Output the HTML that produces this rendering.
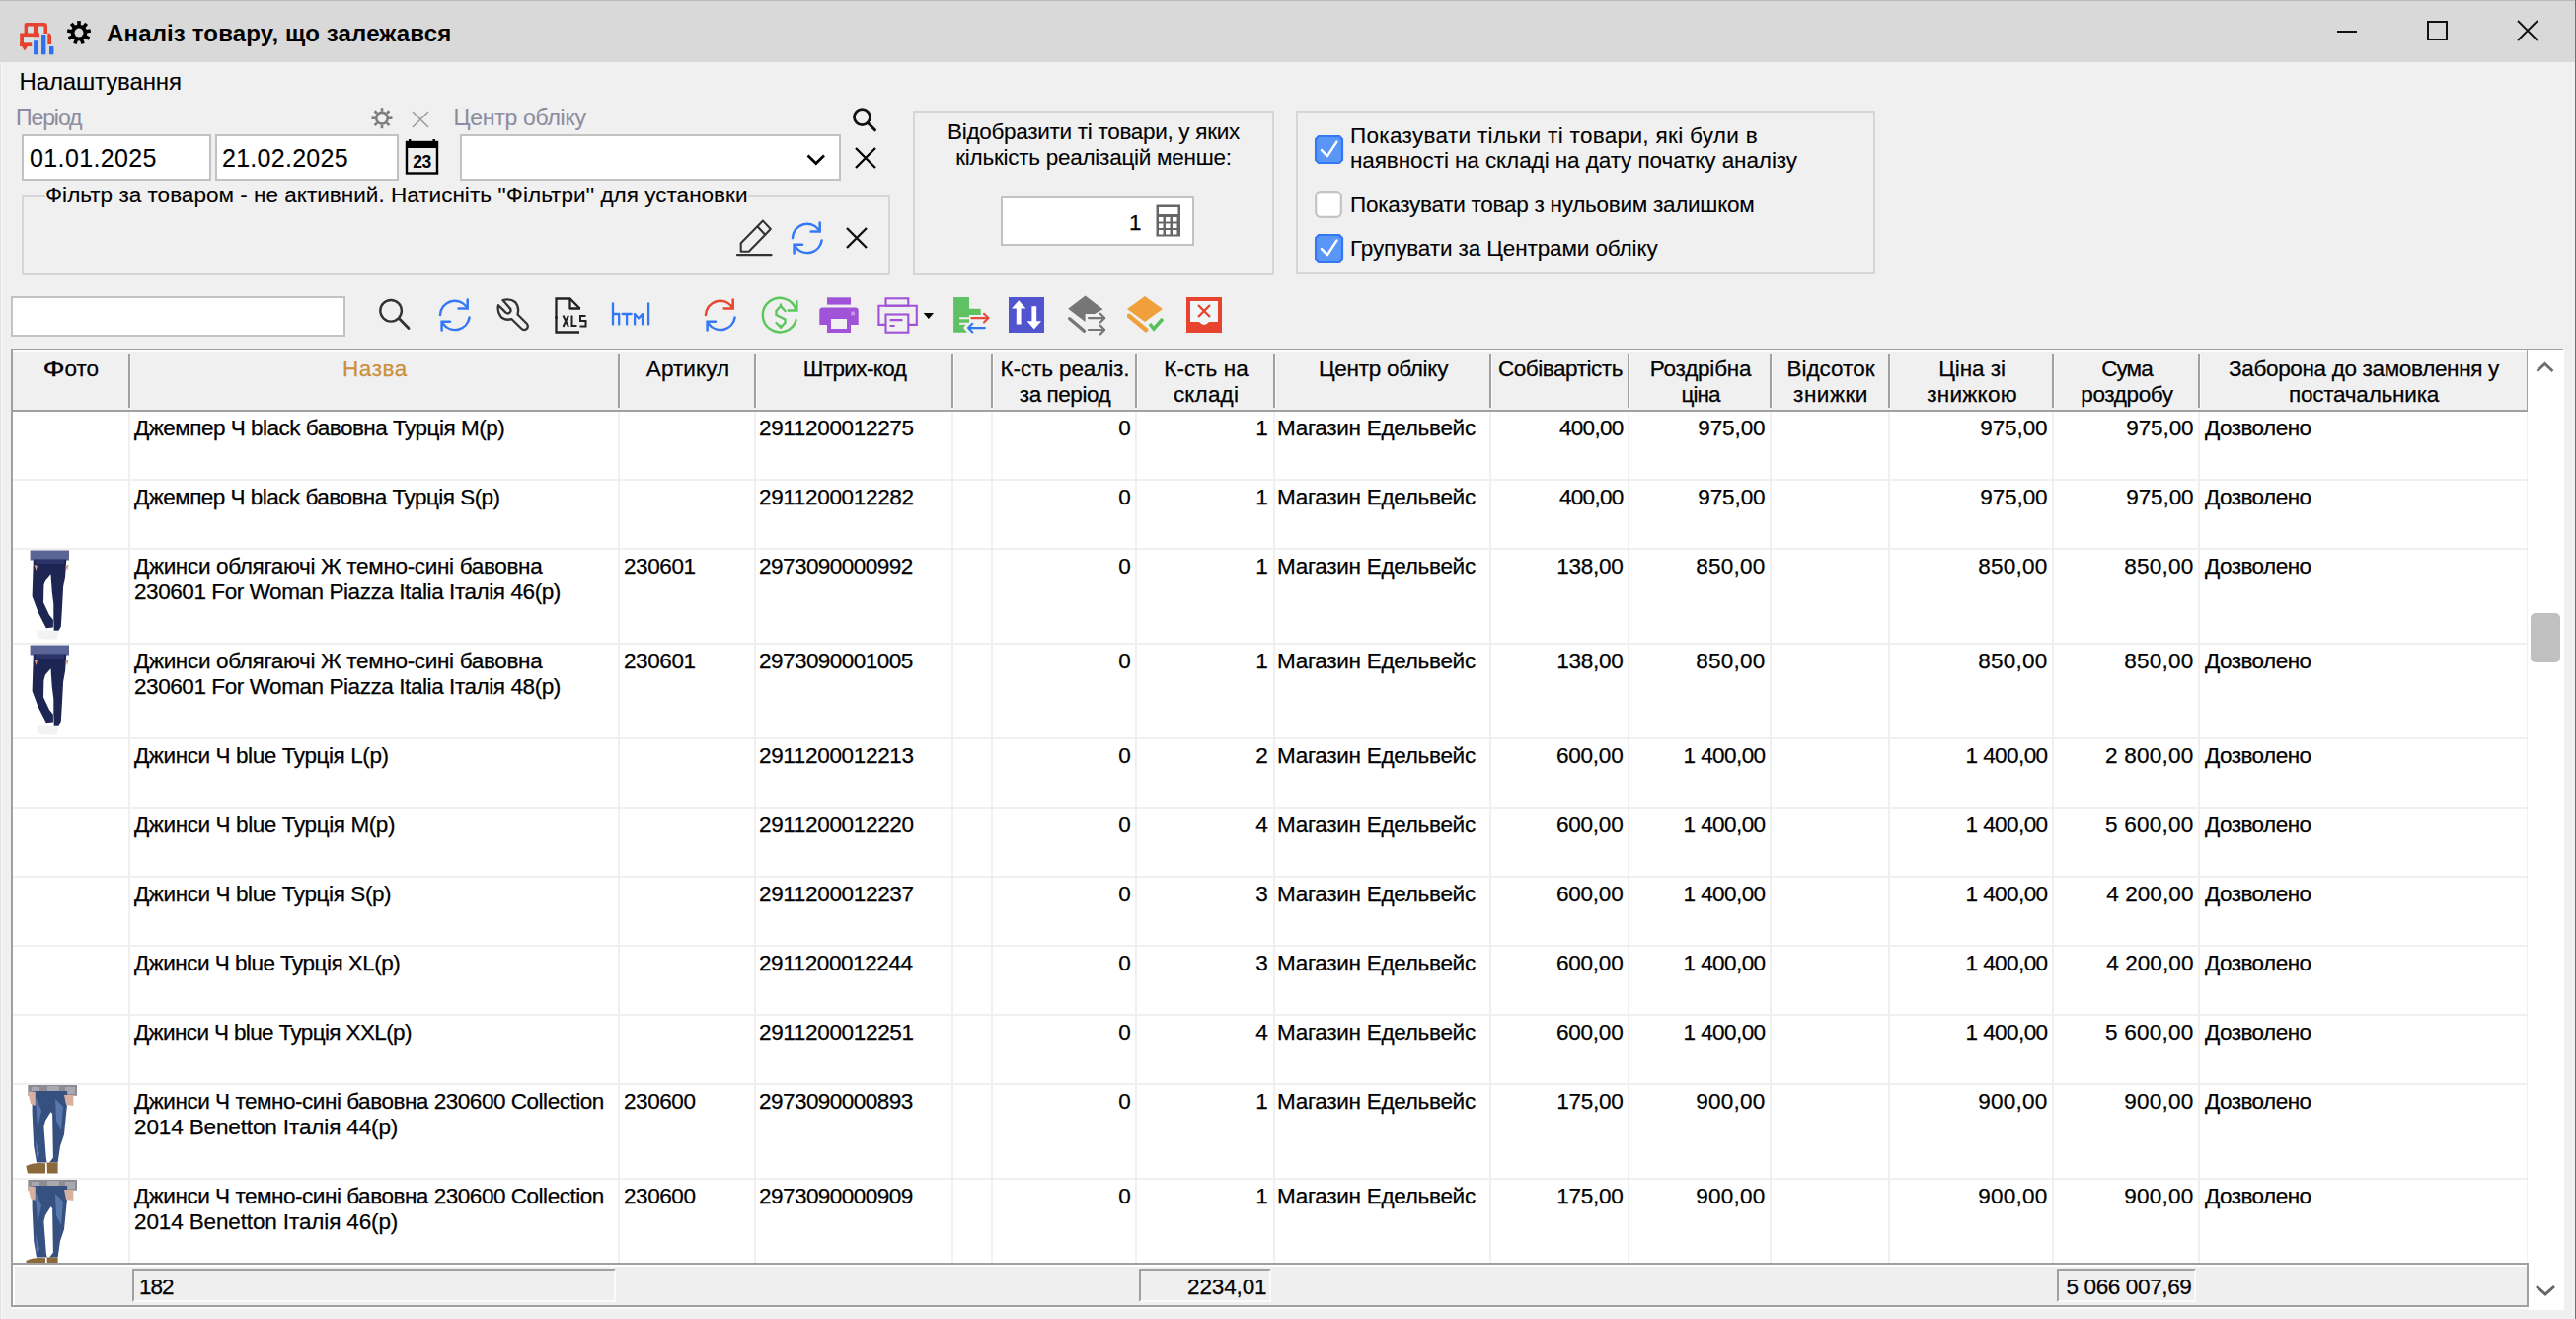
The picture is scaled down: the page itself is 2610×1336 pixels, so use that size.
<!DOCTYPE html>
<html><head><meta charset="utf-8"><title>Аналіз товару, що залежався</title>
<style>
html,body{margin:0;padding:0;}
body{width:2610px;height:1336px;position:relative;overflow:hidden;background:#f0f0f0;font-family:"Liberation Sans",sans-serif;}
.t{position:absolute;white-space:nowrap;font-family:"Liberation Sans",sans-serif;}
.r{position:absolute;}
</style></head><body>
<div class="r" style="left:0px;top:0px;width:2610px;height:1px;background:#b9b9b9;"></div>
<div class="r" style="left:0px;top:1px;width:2610px;height:62px;background:#d9d9d9;"></div>
<div class="r" style="left:2609px;top:0px;width:1px;height:1336px;background:#707070;"></div>
<div class="r" style="left:0px;top:63px;width:1px;height:1273px;background:#e2e2e2;"></div>
<div class="r" style="left:1px;top:63px;width:1px;height:1273px;background:#f8f8f8;"></div>
<svg class="r" style="left:0px;top:0px" width="60" height="60" viewBox="0 0 60 60">
<path d="M26.4 34 V25 Q26.4 24.8 27 24.8 H45 Q46.2 24.8 46.2 26.5 V34" fill="none" stroke="#e8412f" stroke-width="3.6"/>
<rect x="33.7" y="26" width="5" height="8" fill="#e8412f"/>
<rect x="28.2" y="27.3" width="5.5" height="5.5" fill="#d2e2e6"/><rect x="38.7" y="27.3" width="5.4" height="5.5" fill="#d2e2e6"/>
<path d="M22.1 47 V35.4 H40" fill="none" stroke="#e8412f" stroke-width="3.8"/>
<path d="M50.2 45 V37 Q50.2 35.4 48.4 35.2" fill="none" stroke="#e8412f" stroke-width="3.8"/>
<path d="M20.2 43.2 H32.2 V47 H20.2 Z" fill="#e8412f"/>
<path d="M21.8 46.5 H28.2 L25 51.4 Z" fill="#e8412f"/>
<rect x="24" y="37.3" width="10" height="5.9" fill="#d6e6e6"/>
<rect x="34.1" y="41.2" width="4.3" height="14.1" fill="#2f6ff0"/>
<rect x="42" y="35" width="4.4" height="20.3" fill="#2f6ff0"/>
<rect x="50" y="47" width="4.4" height="8.3" fill="#2f6ff0"/>
</svg>
<svg class="r" style="left:60px;top:14px" width="40" height="40" viewBox="0 0 40 40"><circle cx="20" cy="19.1" r="8.4" fill="#000"/><rect x="18.2" y="7.100000000000001" width="3.6" height="6" fill="#000" transform="rotate(0.0 20 19.1)"/><rect x="18.2" y="7.100000000000001" width="3.6" height="6" fill="#000" transform="rotate(40.0 20 19.1)"/><rect x="18.2" y="7.100000000000001" width="3.6" height="6" fill="#000" transform="rotate(80.0 20 19.1)"/><rect x="18.2" y="7.100000000000001" width="3.6" height="6" fill="#000" transform="rotate(120.0 20 19.1)"/><rect x="18.2" y="7.100000000000001" width="3.6" height="6" fill="#000" transform="rotate(160.0 20 19.1)"/><rect x="18.2" y="7.100000000000001" width="3.6" height="6" fill="#000" transform="rotate(200.0 20 19.1)"/><rect x="18.2" y="7.100000000000001" width="3.6" height="6" fill="#000" transform="rotate(240.0 20 19.1)"/><rect x="18.2" y="7.100000000000001" width="3.6" height="6" fill="#000" transform="rotate(280.0 20 19.1)"/><rect x="18.2" y="7.100000000000001" width="3.6" height="6" fill="#000" transform="rotate(320.0 20 19.1)"/><circle cx="20" cy="19.1" r="4.5" fill="#d9d9d9"/></svg>
<div class="t" style="top:18.18px;font-size:24px;line-height:31px;color:#000;font-weight:bold;letter-spacing:0.154px;left:108px;">Аналіз товару, що залежався</div>
<div class="r" style="left:2368px;top:31px;width:20px;height:2px;background:#111;"></div>
<div class="r" style="left:2459px;top:21px;width:21px;height:20px;border:2px solid #111;box-sizing:border-box;"></div>
<svg class="r" style="left:2550px;top:20px" width="22" height="22" viewBox="0 0 22 22"><path d="M1 1 L21 21 M21 1 L1 21" stroke="#111" stroke-width="1.8"/></svg>
<div class="t" style="top:67.18px;font-size:24px;line-height:31px;color:#000;letter-spacing:-0.136px;left:19.5px;-webkit-text-stroke:0.1px #000;">Налаштування</div>
<div class="t" style="top:104.03px;font-size:23px;line-height:30px;color:#8d8d9f;letter-spacing:-1.08px;left:16px;-webkit-text-stroke:0.1px #8d8d9f;">Період</div>
<svg class="r" style="left:375px;top:108px" width="24" height="24" viewBox="0 0 24 24"><circle cx="12" cy="11.7" r="5.8" fill="none" stroke="#7c7c7c" stroke-width="2.6"/><line x1="12.00" y1="4.70" x2="12.00" y2="1.20" stroke="#7c7c7c" stroke-width="2.6"/><line x1="16.95" y1="6.75" x2="19.42" y2="4.28" stroke="#7c7c7c" stroke-width="2.6"/><line x1="19.00" y1="11.70" x2="22.50" y2="11.70" stroke="#7c7c7c" stroke-width="2.6"/><line x1="16.95" y1="16.65" x2="19.42" y2="19.12" stroke="#7c7c7c" stroke-width="2.6"/><line x1="12.00" y1="18.70" x2="12.00" y2="22.20" stroke="#7c7c7c" stroke-width="2.6"/><line x1="7.05" y1="16.65" x2="4.58" y2="19.12" stroke="#7c7c7c" stroke-width="2.6"/><line x1="5.00" y1="11.70" x2="1.50" y2="11.70" stroke="#7c7c7c" stroke-width="2.6"/><line x1="7.05" y1="6.75" x2="4.58" y2="4.28" stroke="#7c7c7c" stroke-width="2.6"/></svg>
<svg class="r" style="left:416px;top:111px" width="20" height="20" viewBox="0 0 20 20"><path d="M2 2 L18 18 M18 2 L2 18" stroke="#9c9c9c" stroke-width="1.6"/></svg>
<div class="t" style="top:104.03px;font-size:23px;line-height:30px;color:#8d8d9f;letter-spacing:-0.273px;left:459.5px;-webkit-text-stroke:0.1px #8d8d9f;">Центр обліку</div>
<svg class="r" style="left:860px;top:106px" width="30" height="30" viewBox="0 0 30 30"><circle cx="13.5" cy="12.7" r="8" fill="none" stroke="#111" stroke-width="2.8"/><path d="M19.3 18.5 L26.5 25.8" stroke="#111" stroke-width="3" stroke-linecap="round"/></svg>
<div class="r" style="left:22px;top:136px;width:192px;height:47px;background:#fff;border:2px solid #c2c2c2;box-sizing:border-box;"></div>
<div class="r" style="left:218px;top:136px;width:186px;height:47px;background:#fff;border:2px solid #c2c2c2;box-sizing:border-box;"></div>
<div class="t" style="top:144.34px;font-size:25px;line-height:32px;color:#000;letter-spacing:0.378px;left:30px;-webkit-text-stroke:0.1px #000;">01.01.2025</div>
<div class="t" style="top:144.34px;font-size:25px;line-height:32px;color:#000;letter-spacing:0.278px;left:225px;-webkit-text-stroke:0.1px #000;">21.02.2025</div>
<svg class="r" style="left:410px;top:140px" width="35" height="38" viewBox="0 0 35 38"><rect x="2" y="4" width="31" height="31.5" fill="#eeeeee" stroke="#000" stroke-width="2.4"/><rect x="1" y="3" width="33" height="7" fill="#000"/><rect x="4" y="1" width="2.4" height="4" fill="#000"/><rect x="28.5" y="1" width="2.4" height="4" fill="#000"/><text x="17.5" y="29.5" font-family="Liberation Sans" font-weight="bold" font-size="17.5" text-anchor="middle" fill="#000" letter-spacing="-0.5">23</text></svg>
<div class="r" style="left:466px;top:136px;width:386px;height:47px;background:#fff;border:2px solid #c2c2c2;box-sizing:border-box;"></div>
<svg class="r" style="left:816px;top:155px" width="22" height="14" viewBox="0 0 22 14"><path d="M2.5 2.5 L10.8 10.5 L19 2.5" fill="none" stroke="#000" stroke-width="2.7"/></svg>
<svg class="r" style="left:865px;top:148px" width="24" height="24" viewBox="0 0 24 24"><path d="M2 2 L22 22 M22 2 L2 22" stroke="#000" stroke-width="2.3"/></svg>
<div class="r" style="left:22px;top:198px;width:880px;height:81px;border:2px solid #d6d6d6;box-sizing:border-box;"></div>
<div class="r" style="left:46px;top:190px;width:712px;height:22px;background:#f0f0f0;"></div>
<div class="t" style="top:182.70px;font-size:22.5px;line-height:29px;color:#000;letter-spacing:0.019px;left:46px;-webkit-text-stroke:0.1px #000;">Фільтр за товаром - не активний. Натисніть &#x27;&#x27;Фільтри&#x27;&#x27; для установки</div>
<svg class="r" style="left:744px;top:222px" width="40" height="40" viewBox="0 0 40 40"><path d="M6.7 32.7 V24.3 L29 1.6 L36.8 10 L14.8 32.7 Z" fill="none" stroke="#333" stroke-width="2.1" stroke-linejoin="round"/><path d="M23.4 7.3 L31.2 15.8" stroke="#333" stroke-width="2.1"/><path d="M3 36.2 H37.5" stroke="#333" stroke-width="2.2" stroke-linecap="round"/></svg>
<svg class="r" style="left:800px;top:223px" width="36" height="36" viewBox="0 0 36 36"><path d="M3 18 A14.8 14.8 0 0 1 29.5 9.5" fill="none" stroke="#3478f6" stroke-width="2.5" stroke-linecap="round"/><path d="M30.7 2.4 V11.5 H21.6" fill="none" stroke="#3478f6" stroke-width="2.5" stroke-linecap="round"/><path d="M32.6 20.5 A14.8 14.8 0 0 1 6 27" fill="none" stroke="#3478f6" stroke-width="2.5" stroke-linecap="round"/><path d="M4.6 33.6 V24.7 H13" fill="none" stroke="#3478f6" stroke-width="2.5" stroke-linecap="round"/></svg>
<svg class="r" style="left:856px;top:229px" width="24" height="24" viewBox="0 0 24 24"><path d="M2 2 L22 22 M22 2 L2 22" stroke="#111" stroke-width="2.4"/></svg>
<div class="r" style="left:925px;top:112px;width:366px;height:167px;border:2px solid #d6d6d6;box-sizing:border-box;"></div>
<div class="t" style="top:118.70px;font-size:22.5px;line-height:29px;color:#000;letter-spacing:-0.304px;left:508px;width:1200px;text-align:center;-webkit-text-stroke:0.1px #000;">Відобразити ті товари, у яких</div>
<div class="t" style="top:144.70px;font-size:22.5px;line-height:29px;color:#000;letter-spacing:-0.258px;left:508px;width:1200px;text-align:center;-webkit-text-stroke:0.1px #000;">кількість реалізацій менше:</div>
<div class="r" style="left:1014px;top:199px;width:196px;height:50px;background:#fff;border:2px solid #c2c2c2;box-sizing:border-box;"></div>
<div class="t" style="top:210.70px;font-size:22.5px;line-height:29px;color:#000;left:-43.5px;width:1200px;text-align:right;-webkit-text-stroke:0.25px #000;">1</div>
<svg class="r" style="left:1171px;top:207px" width="26" height="33" viewBox="0 0 26 33"><rect x="0.5" y="0.5" width="24.5" height="32" fill="#666"/><rect x="3" y="3" width="19.5" height="7" fill="#fff"/><rect x="3" y="13.0" width="4.5" height="4.5" fill="#fff"/><rect x="10" y="13.0" width="4.5" height="4.5" fill="#fff"/><rect x="17" y="13.0" width="4.5" height="4.5" fill="#fff"/><rect x="3" y="19.5" width="4.5" height="4.5" fill="#fff"/><rect x="10" y="19.5" width="4.5" height="4.5" fill="#fff"/><rect x="17" y="19.5" width="4.5" height="4.5" fill="#fff"/><rect x="3" y="26.0" width="4.5" height="4.5" fill="#fff"/><rect x="10" y="26.0" width="4.5" height="4.5" fill="#fff"/><rect x="17" y="26.0" width="4.5" height="4.5" fill="#fff"/></svg>
<div class="r" style="left:1313px;top:112px;width:587px;height:166px;border:2px solid #d6d6d6;box-sizing:border-box;"></div>
<svg class="r" style="left:1331.5px;top:136.8px" width="30" height="30" viewBox="0 0 30 30"><path d="M4 1 H25 L28 4 V25 L25 28 H4 L1 25 V4 Z" fill="#5a96f5" stroke="#3478f6" stroke-width="2.2" stroke-linejoin="round"/><path d="M7 15.2 L12.9 21.1 L22.4 6.6" fill="none" stroke="#fff" stroke-width="2.5" stroke-linecap="round" stroke-linejoin="round"/></svg>
<svg class="r" style="left:1331.5px;top:193px" width="30" height="30" viewBox="0 0 30 30"><rect x="1.2" y="1.2" width="25.6" height="25.6" rx="4.5" fill="#fff" stroke="#c4c4c4" stroke-width="2.2"/></svg>
<svg class="r" style="left:1331.5px;top:236.8px" width="30" height="30" viewBox="0 0 30 30"><path d="M4 1 H25 L28 4 V25 L25 28 H4 L1 25 V4 Z" fill="#5a96f5" stroke="#3478f6" stroke-width="2.2" stroke-linejoin="round"/><path d="M7 15.2 L12.9 21.1 L22.4 6.6" fill="none" stroke="#fff" stroke-width="2.5" stroke-linecap="round" stroke-linejoin="round"/></svg>
<div class="t" style="top:122.70px;font-size:22.5px;line-height:29px;color:#000;letter-spacing:0.321px;left:1368px;-webkit-text-stroke:0.1px #000;">Показувати тільки ті товари, які були в</div>
<div class="t" style="top:148.20px;font-size:22.5px;line-height:29px;color:#000;letter-spacing:-0.083px;left:1368px;-webkit-text-stroke:0.1px #000;">наявності на складі на дату початку аналізу</div>
<div class="t" style="top:192.70px;font-size:22.5px;line-height:29px;color:#000;letter-spacing:-0.266px;left:1368px;-webkit-text-stroke:0.1px #000;">Показувати товар з нульовим залишком</div>
<div class="t" style="top:236.70px;font-size:22.5px;line-height:29px;color:#000;letter-spacing:-0.119px;left:1368px;-webkit-text-stroke:0.1px #000;">Групувати за Центрами обліку</div>
<div class="r" style="left:11px;top:300px;width:339px;height:41px;background:#fff;border:2px solid #c2c2c2;box-sizing:border-box;"></div>
<svg class="r" style="left:380px;top:298px" width="40" height="40" viewBox="0 0 40 40"><circle cx="16.1" cy="16.8" r="10.8" fill="none" stroke="#333" stroke-width="2.4"/><path d="M24.5 24.8 L34 34.5" stroke="#333" stroke-width="2.8" stroke-linecap="round"/></svg>
<svg class="r" style="left:442.5px;top:301px" width="36" height="36" viewBox="0 0 36 36"><path d="M3 18 A14.8 14.8 0 0 1 29.5 9.5" fill="none" stroke="#3478f6" stroke-width="2.5" stroke-linecap="round"/><path d="M30.7 2.4 V11.5 H21.6" fill="none" stroke="#3478f6" stroke-width="2.5" stroke-linecap="round"/><path d="M32.6 20.5 A14.8 14.8 0 0 1 6 27" fill="none" stroke="#3478f6" stroke-width="2.5" stroke-linecap="round"/><path d="M4.6 33.6 V24.7 H13" fill="none" stroke="#3478f6" stroke-width="2.5" stroke-linecap="round"/></svg>
<svg class="r" style="left:503px;top:302px" width="34" height="34" viewBox="0 0 34 34"><path d="M6.5 2 Q14 0 19 4 Q23.5 9 21.5 16.5 L31 26 Q33 29.5 30 31.5 Q27.5 33 25 30.5 L15.5 21.2 Q9 23 4.5 18.8 Q0.5 13.5 2 7.2 L9.5 14.6 Q12 16.5 14 14 Q15.5 11.5 13 9.5 Z" fill="none" stroke="#333" stroke-width="2.3" stroke-linejoin="round"/></svg>
<svg class="r" style="left:560px;top:300px" width="38" height="40" viewBox="0 0 38 40"><path d="M3.5 23 V2.5 H17.5 L27.5 12.5" fill="none" stroke="#222" stroke-width="2.3"/><path d="M17.5 2.5 V12.5 H28" fill="none" stroke="#222" stroke-width="2.3" stroke-linejoin="round"/><path d="M3.5 20 V36.5 H27" fill="none" stroke="#222" stroke-width="2.3"/><path d="M10.5 19.5 L16 31 M16 19.5 L10.5 31" stroke="#222" stroke-width="2"/><path d="M19.5 19.5 V30 H24.5" fill="none" stroke="#222" stroke-width="2"/><path d="M33.5 20 H28 V25 H33.5 V30.5 H27.5" fill="none" stroke="#222" stroke-width="2"/></svg>
<svg class="r" style="left:605px;top:295px" width="60" height="45" viewBox="0 0 60 45"><g fill="none" stroke="#3478f6" stroke-width="2.3" stroke-linecap="round" stroke-linejoin="round"><path d="M16 12.5 V33.5 M16 23 H22.2 V33.5"/><path d="M25.6 23 H34.7 M30.1 23 V33.5"/><path d="M38.1 33.5 V23 L42.1 27.4 L46 23 V33.5"/><path d="M52.1 12.5 V33.5"/></g></svg>
<svg class="r" style="left:712px;top:301px" width="36" height="36" viewBox="0 0 36 36"><path d="M3 18 A14.8 14.8 0 0 1 29.5 9.5" fill="none" stroke="#e8472f" stroke-width="2.5" stroke-linecap="round"/><path d="M30.7 2.4 V11.5 H21.6" fill="none" stroke="#e8472f" stroke-width="2.5" stroke-linecap="round"/><path d="M32.6 20.5 A14.8 14.8 0 0 1 6 27" fill="none" stroke="#3478f6" stroke-width="2.5" stroke-linecap="round"/><path d="M4.6 33.6 V24.7 H13" fill="none" stroke="#3478f6" stroke-width="2.5" stroke-linecap="round"/></svg>
<svg class="r" style="left:765px;top:295px" width="50" height="46" viewBox="0 0 50 46"><g fill="none" stroke="#5cc65c" stroke-width="2.4" stroke-linecap="round"><path d="M41.5 18.5 A17.3 17.3 0 1 0 41.7 29.1"/><path d="M42.4 10.3 V19.5 H33.6"/><path d="M30.5 20 L26 15 L21.5 20 V24 L30.5 28.5 V32 L26 36.5 L21.5 32"/><path d="M26 13.5 V15 M26 36.5 V35"/></g></svg>
<svg class="r" style="left:765px;top:295px" width="110" height="46" viewBox="0 0 110 46"><path d="M73 6.3 H97 V13.6 H73 Z" fill="#a052d8"/><path d="M65.3 19.5 Q65.3 16.6 68.3 16.6 H101.7 Q104.7 16.6 104.7 19.5 V33.9 H97 V42 H73 V33.9 H65.3 Z" fill="#a052d8"/><rect x="77" y="28" width="16" height="10" fill="#f0f0f0"/><rect x="97.3" y="20.6" width="3.7" height="3.7" fill="#c89ae8"/></svg>
<svg class="r" style="left:889px;top:295px" width="70" height="46" viewBox="0 0 70 46"><g fill="none" stroke="#a052d8" stroke-width="2.1"><rect x="8.5" y="7.3" width="22.8" height="7.4"/><path d="M8.5 33.9 H1.4 V14.7 H39.8 V33.9 H31.3"/><rect x="8.5" y="23.5" width="22.8" height="18.2"/><path d="M12.6 29.1 H25.5 M12.6 35 H17.7"/></g><path d="M46.7 22.1 H57 L51.85 28 Z" fill="#000"/></svg>
<svg class="r" style="left:960px;top:295px" width="50" height="50" viewBox="0 0 50 50"><path d="M6.1 6.1 H22 V17.8 H33.7 V23.9 H22 V26.2 H12.1 V28.2 H22 V31.8 H12.1 V33.8 H18.5 L16 37.1 L20 41.7 H6.1 Z" fill="#5fc162"/><g fill="none" stroke-width="2.1" stroke-linecap="round" stroke-linejoin="round"><path d="M24.3 27.1 H41.5 M37 22.8 L41.5 27.1 L37 31.4" stroke="#e84a3a"/><path d="M37.9 37.1 H21 M25.3 32.8 L21 37.1 L25.3 41.4" stroke="#2f78f2"/></g></svg>
<svg class="r" style="left:1022px;top:301px" width="36" height="36" viewBox="0 0 36 36"><rect x="0" y="0" width="36" height="36" fill="#5254cf"/><path d="M10.2 3.2 L17.4 11.6 H12.6 V27.5 H7.8 V11.6 H3 Z" fill="#fff"/><path d="M25.8 32.6 L33 24.2 H28.2 V9.2 H23.4 V24.2 H18.6 Z" fill="#fff"/></svg>
<svg class="r" style="left:1075px;top:295px" width="50" height="50" viewBox="0 0 50 50"><path d="M7.2 17.8 L24.6 4.5 L42.5 18.2 L34.1 23.1 H24.6 V31.1 Z" fill="#767676"/><path d="M8.7 27.7 L23.5 40.2" stroke="#767676" stroke-width="3.4" stroke-linecap="round"/><g fill="none" stroke="#767676" stroke-width="2.2" stroke-linecap="round" stroke-linejoin="round"><path d="M28 27.1 H44 M39.8 22.7 L44.2 27.1 L39.8 31.5"/><path d="M28 39 H44 M39.8 34.6 L44.2 39 L39.8 43.4"/></g></svg>
<svg class="r" style="left:1142px;top:299px" width="38" height="40" viewBox="0 0 38 40"><path d="M18 1 L0 14 L18 27 L36 14 Z" fill="#f0a03a"/><path d="M2 21 L19 35" stroke="#f0a03a" stroke-width="4.5" stroke-linecap="round"/><path d="M23 29 L27 34 L36 24" fill="none" stroke="#52c15c" stroke-width="3.5"/></svg>
<svg class="r" style="left:1202px;top:301px" width="36" height="36" viewBox="0 0 36 36"><rect x="0" y="0" width="36" height="36" fill="#e8432f"/><rect x="4" y="4" width="28" height="21" fill="#eef6f6"/><path d="M12 8 L24 20 M24 8 L12 20" stroke="#e8432f" stroke-width="2.4"/><path d="M13 25 Q18 31 23 25 Z" fill="#eef6f6"/></svg>
<div class="r" style="left:11px;top:353px;width:2586px;height:2px;background:#a0a0a0;"></div>
<div class="r" style="left:11px;top:353px;width:2px;height:971px;background:#a0a0a0;"></div>
<div class="r" style="left:13px;top:355px;width:2548px;height:61px;background:#f0f0f0;"></div>
<div class="r" style="left:11px;top:415px;width:2550px;height:2px;background:#a0a0a0;"></div>
<div class="r" style="left:2560px;top:353px;width:2px;height:64px;background:#a0a0a0;"></div>
<div class="r" style="left:13px;top:417px;width:2547px;height:862px;background:#ffffff;"></div>
<div class="r" style="left:2561px;top:355px;width:37px;height:972px;background:#ffffff;"></div>
<svg class="r" style="left:2568px;top:365px" width="22" height="14" viewBox="0 0 22 14"><path d="M2.5 11 L10.5 3.5 L18.5 11" fill="none" stroke="#6e6e6e" stroke-width="2.8"/></svg>
<svg class="r" style="left:2568px;top:1300px" width="22" height="14" viewBox="0 0 22 14"><path d="M2 3 L11 11 L20 3" fill="none" stroke="#666" stroke-width="3"/></svg>
<div class="r" style="left:2564px;top:621px;width:30px;height:50px;background:#c0c0c0;border-radius:5px;"></div>
<div class="r" style="left:13px;top:355px;width:2547px;height:2px;background:#fafafa;"></div>
<div class="r" style="left:130px;top:359px;width:2px;height:54px;background:#a0a0a0;"></div>
<div class="r" style="left:132px;top:359px;width:1px;height:54px;background:#fbfbfb;"></div>
<div class="r" style="left:626px;top:359px;width:2px;height:54px;background:#a0a0a0;"></div>
<div class="r" style="left:628px;top:359px;width:1px;height:54px;background:#fbfbfb;"></div>
<div class="r" style="left:764px;top:359px;width:2px;height:54px;background:#a0a0a0;"></div>
<div class="r" style="left:766px;top:359px;width:1px;height:54px;background:#fbfbfb;"></div>
<div class="r" style="left:964px;top:359px;width:2px;height:54px;background:#a0a0a0;"></div>
<div class="r" style="left:966px;top:359px;width:1px;height:54px;background:#fbfbfb;"></div>
<div class="r" style="left:1004px;top:359px;width:2px;height:54px;background:#a0a0a0;"></div>
<div class="r" style="left:1006px;top:359px;width:1px;height:54px;background:#fbfbfb;"></div>
<div class="r" style="left:1150px;top:359px;width:2px;height:54px;background:#a0a0a0;"></div>
<div class="r" style="left:1152px;top:359px;width:1px;height:54px;background:#fbfbfb;"></div>
<div class="r" style="left:1290px;top:359px;width:2px;height:54px;background:#a0a0a0;"></div>
<div class="r" style="left:1292px;top:359px;width:1px;height:54px;background:#fbfbfb;"></div>
<div class="r" style="left:1509px;top:359px;width:2px;height:54px;background:#a0a0a0;"></div>
<div class="r" style="left:1511px;top:359px;width:1px;height:54px;background:#fbfbfb;"></div>
<div class="r" style="left:1649px;top:359px;width:2px;height:54px;background:#a0a0a0;"></div>
<div class="r" style="left:1651px;top:359px;width:1px;height:54px;background:#fbfbfb;"></div>
<div class="r" style="left:1793px;top:359px;width:2px;height:54px;background:#a0a0a0;"></div>
<div class="r" style="left:1795px;top:359px;width:1px;height:54px;background:#fbfbfb;"></div>
<div class="r" style="left:1913px;top:359px;width:2px;height:54px;background:#a0a0a0;"></div>
<div class="r" style="left:1915px;top:359px;width:1px;height:54px;background:#fbfbfb;"></div>
<div class="r" style="left:2079px;top:359px;width:2px;height:54px;background:#a0a0a0;"></div>
<div class="r" style="left:2081px;top:359px;width:1px;height:54px;background:#fbfbfb;"></div>
<div class="r" style="left:2227px;top:359px;width:2px;height:54px;background:#a0a0a0;"></div>
<div class="r" style="left:2229px;top:359px;width:1px;height:54px;background:#fbfbfb;"></div>
<div class="r" style="left:130px;top:417px;width:2px;height:862px;background:#f0f0f0;"></div>
<div class="r" style="left:626px;top:417px;width:2px;height:862px;background:#f0f0f0;"></div>
<div class="r" style="left:764px;top:417px;width:2px;height:862px;background:#f0f0f0;"></div>
<div class="r" style="left:964px;top:417px;width:2px;height:862px;background:#f0f0f0;"></div>
<div class="r" style="left:1004px;top:417px;width:2px;height:862px;background:#f0f0f0;"></div>
<div class="r" style="left:1150px;top:417px;width:2px;height:862px;background:#f0f0f0;"></div>
<div class="r" style="left:1290px;top:417px;width:2px;height:862px;background:#f0f0f0;"></div>
<div class="r" style="left:1509px;top:417px;width:2px;height:862px;background:#f0f0f0;"></div>
<div class="r" style="left:1649px;top:417px;width:2px;height:862px;background:#f0f0f0;"></div>
<div class="r" style="left:1793px;top:417px;width:2px;height:862px;background:#f0f0f0;"></div>
<div class="r" style="left:1913px;top:417px;width:2px;height:862px;background:#f0f0f0;"></div>
<div class="r" style="left:2079px;top:417px;width:2px;height:862px;background:#f0f0f0;"></div>
<div class="r" style="left:2227px;top:417px;width:2px;height:862px;background:#f0f0f0;"></div>
<div class="r" style="left:13px;top:485px;width:2547px;height:2px;background:#f0f0f0;"></div>
<div class="r" style="left:13px;top:555px;width:2547px;height:2px;background:#f0f0f0;"></div>
<div class="r" style="left:13px;top:651px;width:2547px;height:2px;background:#f0f0f0;"></div>
<div class="r" style="left:13px;top:747px;width:2547px;height:2px;background:#f0f0f0;"></div>
<div class="r" style="left:13px;top:817px;width:2547px;height:2px;background:#f0f0f0;"></div>
<div class="r" style="left:13px;top:887px;width:2547px;height:2px;background:#f0f0f0;"></div>
<div class="r" style="left:13px;top:957px;width:2547px;height:2px;background:#f0f0f0;"></div>
<div class="r" style="left:13px;top:1027px;width:2547px;height:2px;background:#f0f0f0;"></div>
<div class="r" style="left:13px;top:1097px;width:2547px;height:2px;background:#f0f0f0;"></div>
<div class="r" style="left:13px;top:1193px;width:2547px;height:2px;background:#f0f0f0;"></div>
<div class="r" style="left:11px;top:1279px;width:2550px;height:2px;background:#a0a0a0;"></div>
<div class="r" style="left:13px;top:1281px;width:2548px;height:42px;background:#efefef;border-top:2px solid #fff;border-left:2px solid #fff;box-sizing:border-box;"></div>
<div class="r" style="left:11px;top:1322px;width:2551px;height:2px;background:#a0a0a0;"></div>
<div class="r" style="left:11px;top:1324px;width:2551px;height:2px;background:#fafafa;"></div>
<div class="r" style="left:2560px;top:1279px;width:2px;height:45px;background:#a0a0a0;"></div>
<div class="r" style="left:134px;top:1285px;width:490px;height:34px;background:#efefef;border-top:2px solid #a0a0a0;border-left:2px solid #a0a0a0;border-right:2px solid #fafafa;border-bottom:2px solid #fafafa;box-sizing:border-box;"></div>
<div class="r" style="left:1154px;top:1285px;width:134px;height:34px;background:#efefef;border-top:2px solid #a0a0a0;border-left:2px solid #a0a0a0;border-right:2px solid #fafafa;border-bottom:2px solid #fafafa;box-sizing:border-box;"></div>
<div class="r" style="left:2084px;top:1285px;width:141px;height:34px;background:#efefef;border-top:2px solid #a0a0a0;border-left:2px solid #a0a0a0;border-right:2px solid #fafafa;border-bottom:2px solid #fafafa;box-sizing:border-box;"></div>
<div class="t" style="top:1288.70px;font-size:22.5px;line-height:29px;color:#000;letter-spacing:-1.0px;left:141px;-webkit-text-stroke:0.25px #000;">182</div>
<div class="t" style="top:1288.70px;font-size:22.5px;line-height:29px;color:#000;letter-spacing:-0.133px;left:83.5px;width:1200px;text-align:right;-webkit-text-stroke:0.25px #000;">2234,01</div>
<div class="t" style="top:1288.70px;font-size:22.5px;line-height:29px;color:#000;letter-spacing:-0.364px;left:2093.5px;-webkit-text-stroke:0.25px #000;">5 066 007,69</div>
<div class="t" style="top:358.70px;font-size:22.5px;line-height:29px;color:#000;letter-spacing:0px;left:-528.5px;width:1200px;text-align:center;-webkit-text-stroke:0.25px #000;"><span style="display:inline-block;transform:scaleX(1.3);transform-origin:center;margin:0 2.7px">Ф</span>ото</div>
<div class="t" style="top:358.70px;font-size:22.5px;line-height:29px;color:#cc8f3c;letter-spacing:0.575px;left:-220.0px;width:1200px;text-align:center;-webkit-text-stroke:0.25px #cc8f3c;">Назва</div>
<div class="t" style="top:358.70px;font-size:22.5px;line-height:29px;color:#000;letter-spacing:0.067px;left:97.0px;width:1200px;text-align:center;-webkit-text-stroke:0.25px #000;">Артикул</div>
<div class="t" style="top:358.70px;font-size:22.5px;line-height:29px;color:#000;letter-spacing:-0.6px;left:266.0px;width:1200px;text-align:center;-webkit-text-stroke:0.25px #000;">Штрих-код</div>
<div class="t" style="top:358.70px;font-size:22.5px;line-height:29px;color:#000;letter-spacing:-0.108px;left:479.0px;width:1200px;text-align:center;-webkit-text-stroke:0.25px #000;">К-сть реаліз.</div>
<div class="t" style="top:384.70px;font-size:22.5px;line-height:29px;color:#000;letter-spacing:-0.45px;left:479.0px;width:1200px;text-align:center;-webkit-text-stroke:0.25px #000;">за період</div>
<div class="t" style="top:358.70px;font-size:22.5px;line-height:29px;color:#000;letter-spacing:0.057px;left:622.0px;width:1200px;text-align:center;-webkit-text-stroke:0.25px #000;">К-сть на</div>
<div class="t" style="top:384.70px;font-size:22.5px;line-height:29px;color:#000;letter-spacing:0.18px;left:622.0px;width:1200px;text-align:center;-webkit-text-stroke:0.25px #000;">складі</div>
<div class="t" style="top:358.70px;font-size:22.5px;line-height:29px;color:#000;letter-spacing:-0.273px;left:801.5px;width:1200px;text-align:center;-webkit-text-stroke:0.25px #000;">Центр обліку</div>
<div class="t" style="top:358.70px;font-size:22.5px;line-height:29px;color:#000;letter-spacing:-0.455px;left:981.0px;width:1200px;text-align:center;-webkit-text-stroke:0.25px #000;">Собівартість</div>
<div class="t" style="top:358.70px;font-size:22.5px;line-height:29px;color:#000;letter-spacing:-0.213px;left:1123.0px;width:1200px;text-align:center;-webkit-text-stroke:0.25px #000;">Роздрібна</div>
<div class="t" style="top:384.70px;font-size:22.5px;line-height:29px;color:#000;letter-spacing:-0.933px;left:1123.0px;width:1200px;text-align:center;-webkit-text-stroke:0.25px #000;">ціна</div>
<div class="t" style="top:358.70px;font-size:22.5px;line-height:29px;color:#000;letter-spacing:0.0px;left:1255.0px;width:1200px;text-align:center;-webkit-text-stroke:0.25px #000;">Відсоток</div>
<div class="t" style="top:384.70px;font-size:22.5px;line-height:29px;color:#000;letter-spacing:0.52px;left:1255.0px;width:1200px;text-align:center;-webkit-text-stroke:0.25px #000;">знижки</div>
<div class="t" style="top:358.70px;font-size:22.5px;line-height:29px;color:#000;letter-spacing:-0.067px;left:1398.0px;width:1200px;text-align:center;-webkit-text-stroke:0.25px #000;">Ціна зі</div>
<div class="t" style="top:384.70px;font-size:22.5px;line-height:29px;color:#000;letter-spacing:0.25px;left:1398.0px;width:1200px;text-align:center;-webkit-text-stroke:0.25px #000;">знижкою</div>
<div class="t" style="top:358.70px;font-size:22.5px;line-height:29px;color:#000;letter-spacing:-0.9px;left:1555.0px;width:1200px;text-align:center;-webkit-text-stroke:0.25px #000;">Сума</div>
<div class="t" style="top:384.70px;font-size:22.5px;line-height:29px;color:#000;letter-spacing:-0.386px;left:1555.0px;width:1200px;text-align:center;-webkit-text-stroke:0.25px #000;">роздробу</div>
<div class="t" style="top:358.70px;font-size:22.5px;line-height:29px;color:#000;letter-spacing:-0.335px;left:1795.0px;width:1200px;text-align:center;-webkit-text-stroke:0.25px #000;">Заборона до замовлення у</div>
<div class="t" style="top:384.70px;font-size:22.5px;line-height:29px;color:#000;letter-spacing:-0.217px;left:1795.0px;width:1200px;text-align:center;-webkit-text-stroke:0.25px #000;">постачальника</div>
<div class="t" style="top:418.70px;font-size:22.5px;line-height:29px;color:#000;letter-spacing:-0.497px;left:136px;-webkit-text-stroke:0.25px #000;">Джемпер Ч black бавовна Турція M(р)</div>
<div class="t" style="top:418.70px;font-size:22.5px;line-height:29px;color:#000;letter-spacing:-0.333px;left:769px;-webkit-text-stroke:0.25px #000;">2911200012275</div>
<div class="t" style="top:418.70px;font-size:22.5px;line-height:29px;color:#000;letter-spacing:-0.3px;left:-54.5px;width:1200px;text-align:right;-webkit-text-stroke:0.25px #000;">0</div>
<div class="t" style="top:418.70px;font-size:22.5px;line-height:29px;color:#000;letter-spacing:-0.3px;left:84.5px;width:1200px;text-align:right;-webkit-text-stroke:0.25px #000;">1</div>
<div class="t" style="top:418.70px;font-size:22.5px;line-height:29px;color:#000;letter-spacing:-0.294px;left:1294px;-webkit-text-stroke:0.25px #000;">Магазин Едельвейс</div>
<div class="t" style="top:418.70px;font-size:22.5px;line-height:29px;color:#000;letter-spacing:-0.72px;left:444.5px;width:1200px;text-align:right;-webkit-text-stroke:0.25px #000;">400,00</div>
<div class="t" style="top:418.70px;font-size:22.5px;line-height:29px;color:#000;letter-spacing:-0.1px;left:588.5px;width:1200px;text-align:right;-webkit-text-stroke:0.25px #000;">975,00</div>
<div class="t" style="top:418.70px;font-size:22.5px;line-height:29px;color:#000;letter-spacing:-0.1px;left:874.5px;width:1200px;text-align:right;-webkit-text-stroke:0.25px #000;">975,00</div>
<div class="t" style="top:418.70px;font-size:22.5px;line-height:29px;color:#000;letter-spacing:-0.1px;left:1022.5px;width:1200px;text-align:right;-webkit-text-stroke:0.25px #000;">975,00</div>
<div class="t" style="top:418.70px;font-size:22.5px;line-height:29px;color:#000;letter-spacing:-0.537px;left:2234px;-webkit-text-stroke:0.25px #000;">Дозволено</div>
<div class="t" style="top:488.70px;font-size:22.5px;line-height:29px;color:#000;letter-spacing:-0.521px;left:136px;-webkit-text-stroke:0.25px #000;">Джемпер Ч black бавовна Турція S(р)</div>
<div class="t" style="top:488.70px;font-size:22.5px;line-height:29px;color:#000;letter-spacing:-0.333px;left:769px;-webkit-text-stroke:0.25px #000;">2911200012282</div>
<div class="t" style="top:488.70px;font-size:22.5px;line-height:29px;color:#000;letter-spacing:-0.3px;left:-54.5px;width:1200px;text-align:right;-webkit-text-stroke:0.25px #000;">0</div>
<div class="t" style="top:488.70px;font-size:22.5px;line-height:29px;color:#000;letter-spacing:-0.3px;left:84.5px;width:1200px;text-align:right;-webkit-text-stroke:0.25px #000;">1</div>
<div class="t" style="top:488.70px;font-size:22.5px;line-height:29px;color:#000;letter-spacing:-0.294px;left:1294px;-webkit-text-stroke:0.25px #000;">Магазин Едельвейс</div>
<div class="t" style="top:488.70px;font-size:22.5px;line-height:29px;color:#000;letter-spacing:-0.72px;left:444.5px;width:1200px;text-align:right;-webkit-text-stroke:0.25px #000;">400,00</div>
<div class="t" style="top:488.70px;font-size:22.5px;line-height:29px;color:#000;letter-spacing:-0.1px;left:588.5px;width:1200px;text-align:right;-webkit-text-stroke:0.25px #000;">975,00</div>
<div class="t" style="top:488.70px;font-size:22.5px;line-height:29px;color:#000;letter-spacing:-0.1px;left:874.5px;width:1200px;text-align:right;-webkit-text-stroke:0.25px #000;">975,00</div>
<div class="t" style="top:488.70px;font-size:22.5px;line-height:29px;color:#000;letter-spacing:-0.1px;left:1022.5px;width:1200px;text-align:right;-webkit-text-stroke:0.25px #000;">975,00</div>
<div class="t" style="top:488.70px;font-size:22.5px;line-height:29px;color:#000;letter-spacing:-0.537px;left:2234px;-webkit-text-stroke:0.25px #000;">Дозволено</div>
<div class="t" style="top:558.70px;font-size:22.5px;line-height:29px;color:#000;letter-spacing:-0.331px;left:136px;-webkit-text-stroke:0.25px #000;">Джинси облягаючі Ж темно-сині бавовна</div>
<div class="t" style="top:584.70px;font-size:22.5px;line-height:29px;color:#000;letter-spacing:-0.426px;left:136px;-webkit-text-stroke:0.25px #000;">230601 For Woman Piazza Italia Італія 46(р)</div>
<div class="t" style="top:558.70px;font-size:22.5px;line-height:29px;color:#000;letter-spacing:-0.4px;left:632px;-webkit-text-stroke:0.25px #000;">230601</div>
<div class="t" style="top:558.70px;font-size:22.5px;line-height:29px;color:#000;letter-spacing:-0.542px;left:769px;-webkit-text-stroke:0.25px #000;">2973090000992</div>
<div class="t" style="top:558.70px;font-size:22.5px;line-height:29px;color:#000;letter-spacing:-0.3px;left:-54.5px;width:1200px;text-align:right;-webkit-text-stroke:0.25px #000;">0</div>
<div class="t" style="top:558.70px;font-size:22.5px;line-height:29px;color:#000;letter-spacing:-0.3px;left:84.5px;width:1200px;text-align:right;-webkit-text-stroke:0.25px #000;">1</div>
<div class="t" style="top:558.70px;font-size:22.5px;line-height:29px;color:#000;letter-spacing:-0.294px;left:1294px;-webkit-text-stroke:0.25px #000;">Магазин Едельвейс</div>
<div class="t" style="top:558.70px;font-size:22.5px;line-height:29px;color:#000;letter-spacing:-0.28px;left:444.5px;width:1200px;text-align:right;-webkit-text-stroke:0.25px #000;">138,00</div>
<div class="t" style="top:558.70px;font-size:22.5px;line-height:29px;color:#000;letter-spacing:0.22px;left:588.5px;width:1200px;text-align:right;-webkit-text-stroke:0.25px #000;">850,00</div>
<div class="t" style="top:558.70px;font-size:22.5px;line-height:29px;color:#000;letter-spacing:0.22px;left:874.5px;width:1200px;text-align:right;-webkit-text-stroke:0.25px #000;">850,00</div>
<div class="t" style="top:558.70px;font-size:22.5px;line-height:29px;color:#000;letter-spacing:0.22px;left:1022.5px;width:1200px;text-align:right;-webkit-text-stroke:0.25px #000;">850,00</div>
<div class="t" style="top:558.70px;font-size:22.5px;line-height:29px;color:#000;letter-spacing:-0.537px;left:2234px;-webkit-text-stroke:0.25px #000;">Дозволено</div>
<svg class="r" style="left:28px;top:557px" width="46" height="94" viewBox="0 0 46 94">
<path d="M2.6 0.5 H42 V10.5 H2.6 Z" fill="#5b6497"/>
<path d="M5.8 9.5 H39.3 L38.1 26.5 L36.1 37.6 L35 58 L33.8 77.8 L31.4 81.7 H26.7 L26.3 69.9 L26.3 54.9 L24.7 42.3 L23.5 24.2 L18 30.5 L16.4 36 L16 53.3 L22 66 L25.9 70.7 L25.9 78.6 L18.8 79.3 L11 64 L4.6 47 Z" fill="#1d2652"/>
<path d="M8 10 H37 V14 H8 Z" fill="#2a3468"/>
<path d="M6.6 14.7 L10 16 L8.5 21 Z M41.7 14.7 L38.5 16 L40 21 Z" fill="#d99a80"/>
<path d="M9 82 Q18 80 31 83 L30 90 Q20 92 10 89 Z" fill="#f2f2f4"/>
</svg>
<div class="t" style="top:654.70px;font-size:22.5px;line-height:29px;color:#000;letter-spacing:-0.331px;left:136px;-webkit-text-stroke:0.25px #000;">Джинси облягаючі Ж темно-сині бавовна</div>
<div class="t" style="top:680.70px;font-size:22.5px;line-height:29px;color:#000;letter-spacing:-0.426px;left:136px;-webkit-text-stroke:0.25px #000;">230601 For Woman Piazza Italia Італія 48(р)</div>
<div class="t" style="top:654.70px;font-size:22.5px;line-height:29px;color:#000;letter-spacing:-0.4px;left:632px;-webkit-text-stroke:0.25px #000;">230601</div>
<div class="t" style="top:654.70px;font-size:22.5px;line-height:29px;color:#000;letter-spacing:-0.542px;left:769px;-webkit-text-stroke:0.25px #000;">2973090001005</div>
<div class="t" style="top:654.70px;font-size:22.5px;line-height:29px;color:#000;letter-spacing:-0.3px;left:-54.5px;width:1200px;text-align:right;-webkit-text-stroke:0.25px #000;">0</div>
<div class="t" style="top:654.70px;font-size:22.5px;line-height:29px;color:#000;letter-spacing:-0.3px;left:84.5px;width:1200px;text-align:right;-webkit-text-stroke:0.25px #000;">1</div>
<div class="t" style="top:654.70px;font-size:22.5px;line-height:29px;color:#000;letter-spacing:-0.294px;left:1294px;-webkit-text-stroke:0.25px #000;">Магазин Едельвейс</div>
<div class="t" style="top:654.70px;font-size:22.5px;line-height:29px;color:#000;letter-spacing:-0.28px;left:444.5px;width:1200px;text-align:right;-webkit-text-stroke:0.25px #000;">138,00</div>
<div class="t" style="top:654.70px;font-size:22.5px;line-height:29px;color:#000;letter-spacing:0.22px;left:588.5px;width:1200px;text-align:right;-webkit-text-stroke:0.25px #000;">850,00</div>
<div class="t" style="top:654.70px;font-size:22.5px;line-height:29px;color:#000;letter-spacing:0.22px;left:874.5px;width:1200px;text-align:right;-webkit-text-stroke:0.25px #000;">850,00</div>
<div class="t" style="top:654.70px;font-size:22.5px;line-height:29px;color:#000;letter-spacing:0.22px;left:1022.5px;width:1200px;text-align:right;-webkit-text-stroke:0.25px #000;">850,00</div>
<div class="t" style="top:654.70px;font-size:22.5px;line-height:29px;color:#000;letter-spacing:-0.537px;left:2234px;-webkit-text-stroke:0.25px #000;">Дозволено</div>
<svg class="r" style="left:28px;top:653px" width="46" height="94" viewBox="0 0 46 94">
<path d="M2.6 0.5 H42 V10.5 H2.6 Z" fill="#5b6497"/>
<path d="M5.8 9.5 H39.3 L38.1 26.5 L36.1 37.6 L35 58 L33.8 77.8 L31.4 81.7 H26.7 L26.3 69.9 L26.3 54.9 L24.7 42.3 L23.5 24.2 L18 30.5 L16.4 36 L16 53.3 L22 66 L25.9 70.7 L25.9 78.6 L18.8 79.3 L11 64 L4.6 47 Z" fill="#1d2652"/>
<path d="M8 10 H37 V14 H8 Z" fill="#2a3468"/>
<path d="M6.6 14.7 L10 16 L8.5 21 Z M41.7 14.7 L38.5 16 L40 21 Z" fill="#d99a80"/>
<path d="M9 82 Q18 80 31 83 L30 90 Q20 92 10 89 Z" fill="#f2f2f4"/>
</svg>
<div class="t" style="top:750.70px;font-size:22.5px;line-height:29px;color:#000;letter-spacing:-0.404px;left:136px;-webkit-text-stroke:0.25px #000;">Джинси Ч blue Турція L(р)</div>
<div class="t" style="top:750.70px;font-size:22.5px;line-height:29px;color:#000;letter-spacing:-0.333px;left:769px;-webkit-text-stroke:0.25px #000;">2911200012213</div>
<div class="t" style="top:750.70px;font-size:22.5px;line-height:29px;color:#000;letter-spacing:-0.3px;left:-54.5px;width:1200px;text-align:right;-webkit-text-stroke:0.25px #000;">0</div>
<div class="t" style="top:750.70px;font-size:22.5px;line-height:29px;color:#000;letter-spacing:-0.3px;left:84.5px;width:1200px;text-align:right;-webkit-text-stroke:0.25px #000;">2</div>
<div class="t" style="top:750.70px;font-size:22.5px;line-height:29px;color:#000;letter-spacing:-0.294px;left:1294px;-webkit-text-stroke:0.25px #000;">Магазин Едельвейс</div>
<div class="t" style="top:750.70px;font-size:22.5px;line-height:29px;color:#000;letter-spacing:-0.2px;left:444.5px;width:1200px;text-align:right;-webkit-text-stroke:0.25px #000;">600,00</div>
<div class="t" style="top:750.70px;font-size:22.5px;line-height:29px;color:#000;letter-spacing:-0.586px;left:588.5px;width:1200px;text-align:right;-webkit-text-stroke:0.25px #000;">1 400,00</div>
<div class="t" style="top:750.70px;font-size:22.5px;line-height:29px;color:#000;letter-spacing:-0.586px;left:874.5px;width:1200px;text-align:right;-webkit-text-stroke:0.25px #000;">1 400,00</div>
<div class="t" style="top:750.70px;font-size:22.5px;line-height:29px;color:#000;letter-spacing:0.229px;left:1022.5px;width:1200px;text-align:right;-webkit-text-stroke:0.25px #000;">2 800,00</div>
<div class="t" style="top:750.70px;font-size:22.5px;line-height:29px;color:#000;letter-spacing:-0.537px;left:2234px;-webkit-text-stroke:0.25px #000;">Дозволено</div>
<div class="t" style="top:820.70px;font-size:22.5px;line-height:29px;color:#000;letter-spacing:-0.396px;left:136px;-webkit-text-stroke:0.25px #000;">Джинси Ч blue Турція M(р)</div>
<div class="t" style="top:820.70px;font-size:22.5px;line-height:29px;color:#000;letter-spacing:-0.333px;left:769px;-webkit-text-stroke:0.25px #000;">2911200012220</div>
<div class="t" style="top:820.70px;font-size:22.5px;line-height:29px;color:#000;letter-spacing:-0.3px;left:-54.5px;width:1200px;text-align:right;-webkit-text-stroke:0.25px #000;">0</div>
<div class="t" style="top:820.70px;font-size:22.5px;line-height:29px;color:#000;letter-spacing:-0.3px;left:84.5px;width:1200px;text-align:right;-webkit-text-stroke:0.25px #000;">4</div>
<div class="t" style="top:820.70px;font-size:22.5px;line-height:29px;color:#000;letter-spacing:-0.294px;left:1294px;-webkit-text-stroke:0.25px #000;">Магазин Едельвейс</div>
<div class="t" style="top:820.70px;font-size:22.5px;line-height:29px;color:#000;letter-spacing:-0.2px;left:444.5px;width:1200px;text-align:right;-webkit-text-stroke:0.25px #000;">600,00</div>
<div class="t" style="top:820.70px;font-size:22.5px;line-height:29px;color:#000;letter-spacing:-0.586px;left:588.5px;width:1200px;text-align:right;-webkit-text-stroke:0.25px #000;">1 400,00</div>
<div class="t" style="top:820.70px;font-size:22.5px;line-height:29px;color:#000;letter-spacing:-0.586px;left:874.5px;width:1200px;text-align:right;-webkit-text-stroke:0.25px #000;">1 400,00</div>
<div class="t" style="top:820.70px;font-size:22.5px;line-height:29px;color:#000;letter-spacing:0.229px;left:1022.5px;width:1200px;text-align:right;-webkit-text-stroke:0.25px #000;">5 600,00</div>
<div class="t" style="top:820.70px;font-size:22.5px;line-height:29px;color:#000;letter-spacing:-0.537px;left:2234px;-webkit-text-stroke:0.25px #000;">Дозволено</div>
<div class="t" style="top:890.70px;font-size:22.5px;line-height:29px;color:#000;letter-spacing:-0.4px;left:136px;-webkit-text-stroke:0.25px #000;">Джинси Ч blue Турція S(р)</div>
<div class="t" style="top:890.70px;font-size:22.5px;line-height:29px;color:#000;letter-spacing:-0.333px;left:769px;-webkit-text-stroke:0.25px #000;">2911200012237</div>
<div class="t" style="top:890.70px;font-size:22.5px;line-height:29px;color:#000;letter-spacing:-0.3px;left:-54.5px;width:1200px;text-align:right;-webkit-text-stroke:0.25px #000;">0</div>
<div class="t" style="top:890.70px;font-size:22.5px;line-height:29px;color:#000;letter-spacing:-0.3px;left:84.5px;width:1200px;text-align:right;-webkit-text-stroke:0.25px #000;">3</div>
<div class="t" style="top:890.70px;font-size:22.5px;line-height:29px;color:#000;letter-spacing:-0.294px;left:1294px;-webkit-text-stroke:0.25px #000;">Магазин Едельвейс</div>
<div class="t" style="top:890.70px;font-size:22.5px;line-height:29px;color:#000;letter-spacing:-0.2px;left:444.5px;width:1200px;text-align:right;-webkit-text-stroke:0.25px #000;">600,00</div>
<div class="t" style="top:890.70px;font-size:22.5px;line-height:29px;color:#000;letter-spacing:-0.586px;left:588.5px;width:1200px;text-align:right;-webkit-text-stroke:0.25px #000;">1 400,00</div>
<div class="t" style="top:890.70px;font-size:22.5px;line-height:29px;color:#000;letter-spacing:-0.586px;left:874.5px;width:1200px;text-align:right;-webkit-text-stroke:0.25px #000;">1 400,00</div>
<div class="t" style="top:890.70px;font-size:22.5px;line-height:29px;color:#000;letter-spacing:0.086px;left:1022.5px;width:1200px;text-align:right;-webkit-text-stroke:0.25px #000;">4 200,00</div>
<div class="t" style="top:890.70px;font-size:22.5px;line-height:29px;color:#000;letter-spacing:-0.537px;left:2234px;-webkit-text-stroke:0.25px #000;">Дозволено</div>
<div class="t" style="top:960.70px;font-size:22.5px;line-height:29px;color:#000;letter-spacing:-0.52px;left:136px;-webkit-text-stroke:0.25px #000;">Джинси Ч blue Турція XL(р)</div>
<div class="t" style="top:960.70px;font-size:22.5px;line-height:29px;color:#000;letter-spacing:-0.417px;left:769px;-webkit-text-stroke:0.25px #000;">2911200012244</div>
<div class="t" style="top:960.70px;font-size:22.5px;line-height:29px;color:#000;letter-spacing:-0.3px;left:-54.5px;width:1200px;text-align:right;-webkit-text-stroke:0.25px #000;">0</div>
<div class="t" style="top:960.70px;font-size:22.5px;line-height:29px;color:#000;letter-spacing:-0.3px;left:84.5px;width:1200px;text-align:right;-webkit-text-stroke:0.25px #000;">3</div>
<div class="t" style="top:960.70px;font-size:22.5px;line-height:29px;color:#000;letter-spacing:-0.294px;left:1294px;-webkit-text-stroke:0.25px #000;">Магазин Едельвейс</div>
<div class="t" style="top:960.70px;font-size:22.5px;line-height:29px;color:#000;letter-spacing:-0.2px;left:444.5px;width:1200px;text-align:right;-webkit-text-stroke:0.25px #000;">600,00</div>
<div class="t" style="top:960.70px;font-size:22.5px;line-height:29px;color:#000;letter-spacing:-0.586px;left:588.5px;width:1200px;text-align:right;-webkit-text-stroke:0.25px #000;">1 400,00</div>
<div class="t" style="top:960.70px;font-size:22.5px;line-height:29px;color:#000;letter-spacing:-0.586px;left:874.5px;width:1200px;text-align:right;-webkit-text-stroke:0.25px #000;">1 400,00</div>
<div class="t" style="top:960.70px;font-size:22.5px;line-height:29px;color:#000;letter-spacing:0.086px;left:1022.5px;width:1200px;text-align:right;-webkit-text-stroke:0.25px #000;">4 200,00</div>
<div class="t" style="top:960.70px;font-size:22.5px;line-height:29px;color:#000;letter-spacing:-0.537px;left:2234px;-webkit-text-stroke:0.25px #000;">Дозволено</div>
<div class="t" style="top:1030.70px;font-size:22.5px;line-height:29px;color:#000;letter-spacing:-0.627px;left:136px;-webkit-text-stroke:0.25px #000;">Джинси Ч blue Турція XXL(р)</div>
<div class="t" style="top:1030.70px;font-size:22.5px;line-height:29px;color:#000;letter-spacing:-0.333px;left:769px;-webkit-text-stroke:0.25px #000;">2911200012251</div>
<div class="t" style="top:1030.70px;font-size:22.5px;line-height:29px;color:#000;letter-spacing:-0.3px;left:-54.5px;width:1200px;text-align:right;-webkit-text-stroke:0.25px #000;">0</div>
<div class="t" style="top:1030.70px;font-size:22.5px;line-height:29px;color:#000;letter-spacing:-0.3px;left:84.5px;width:1200px;text-align:right;-webkit-text-stroke:0.25px #000;">4</div>
<div class="t" style="top:1030.70px;font-size:22.5px;line-height:29px;color:#000;letter-spacing:-0.294px;left:1294px;-webkit-text-stroke:0.25px #000;">Магазин Едельвейс</div>
<div class="t" style="top:1030.70px;font-size:22.5px;line-height:29px;color:#000;letter-spacing:-0.2px;left:444.5px;width:1200px;text-align:right;-webkit-text-stroke:0.25px #000;">600,00</div>
<div class="t" style="top:1030.70px;font-size:22.5px;line-height:29px;color:#000;letter-spacing:-0.586px;left:588.5px;width:1200px;text-align:right;-webkit-text-stroke:0.25px #000;">1 400,00</div>
<div class="t" style="top:1030.70px;font-size:22.5px;line-height:29px;color:#000;letter-spacing:-0.586px;left:874.5px;width:1200px;text-align:right;-webkit-text-stroke:0.25px #000;">1 400,00</div>
<div class="t" style="top:1030.70px;font-size:22.5px;line-height:29px;color:#000;letter-spacing:0.229px;left:1022.5px;width:1200px;text-align:right;-webkit-text-stroke:0.25px #000;">5 600,00</div>
<div class="t" style="top:1030.70px;font-size:22.5px;line-height:29px;color:#000;letter-spacing:-0.537px;left:2234px;-webkit-text-stroke:0.25px #000;">Дозволено</div>
<div class="t" style="top:1100.70px;font-size:22.5px;line-height:29px;color:#000;letter-spacing:-0.468px;left:136px;-webkit-text-stroke:0.25px #000;">Джинси Ч темно-сині бавовна 230600 Collection</div>
<div class="t" style="top:1126.70px;font-size:22.5px;line-height:29px;color:#000;letter-spacing:-0.128px;left:136px;-webkit-text-stroke:0.25px #000;">2014 Benetton Італія 44(р)</div>
<div class="t" style="top:1100.70px;font-size:22.5px;line-height:29px;color:#000;letter-spacing:-0.42px;left:632px;-webkit-text-stroke:0.25px #000;">230600</div>
<div class="t" style="top:1100.70px;font-size:22.5px;line-height:29px;color:#000;letter-spacing:-0.542px;left:769px;-webkit-text-stroke:0.25px #000;">2973090000893</div>
<div class="t" style="top:1100.70px;font-size:22.5px;line-height:29px;color:#000;letter-spacing:-0.3px;left:-54.5px;width:1200px;text-align:right;-webkit-text-stroke:0.25px #000;">0</div>
<div class="t" style="top:1100.70px;font-size:22.5px;line-height:29px;color:#000;letter-spacing:-0.3px;left:84.5px;width:1200px;text-align:right;-webkit-text-stroke:0.25px #000;">1</div>
<div class="t" style="top:1100.70px;font-size:22.5px;line-height:29px;color:#000;letter-spacing:-0.294px;left:1294px;-webkit-text-stroke:0.25px #000;">Магазин Едельвейс</div>
<div class="t" style="top:1100.70px;font-size:22.5px;line-height:29px;color:#000;letter-spacing:-0.28px;left:444.5px;width:1200px;text-align:right;-webkit-text-stroke:0.25px #000;">175,00</div>
<div class="t" style="top:1100.70px;font-size:22.5px;line-height:29px;color:#000;letter-spacing:0.22px;left:588.5px;width:1200px;text-align:right;-webkit-text-stroke:0.25px #000;">900,00</div>
<div class="t" style="top:1100.70px;font-size:22.5px;line-height:29px;color:#000;letter-spacing:0.22px;left:874.5px;width:1200px;text-align:right;-webkit-text-stroke:0.25px #000;">900,00</div>
<div class="t" style="top:1100.70px;font-size:22.5px;line-height:29px;color:#000;letter-spacing:0.22px;left:1022.5px;width:1200px;text-align:right;-webkit-text-stroke:0.25px #000;">900,00</div>
<div class="t" style="top:1100.70px;font-size:22.5px;line-height:29px;color:#000;letter-spacing:-0.537px;left:2234px;-webkit-text-stroke:0.25px #000;">Дозволено</div>
<svg class="r" style="left:26px;top:1099px" width="56" height="96" viewBox="0 0 56 96">
<path d="M2.3 0 H52 V10.8 H2.3 Z" fill="#8c8c94"/>
<path d="M6 2 H14 V8 H6 Z M22 1 H34 V7 H22 Z M40 2 H50 V9 H40 Z" fill="#a8a8ae"/>
<path d="M6.6 6 H42.1 L42.1 18.6 L39 50.2 L35 62 L32.6 78.6 H24 L27.9 73.8 L27.1 28.9 L25.5 27.3 L20 36 L18.4 42.3 L20.8 73.8 L21.6 78.6 H11 L8.2 62 L6.6 28.1 Z" fill="#36507f"/>
<path d="M10 12 L16 26 L12 44 Z M30 14 L38 22 L36 46 L31 36 Z M10 55 L14 70 L11 74 Z" fill="#5877ab"/>
<path d="M2.3 6.8 H9.8 V21 L5 19 Z M39 10 H48.4 V21 L41 20 Z" fill="#d8b0a0"/>
<path d="M0.3 82 Q8 78 20 79.3 L20 89.6 H2 Z M21.6 78.6 H32.6 V89.6 H22 Z" fill="#8a6a3c"/>
</svg>
<div class="t" style="top:1196.70px;font-size:22.5px;line-height:29px;color:#000;letter-spacing:-0.468px;left:136px;-webkit-text-stroke:0.25px #000;">Джинси Ч темно-сині бавовна 230600 Collection</div>
<div class="t" style="top:1222.70px;font-size:22.5px;line-height:29px;color:#000;letter-spacing:-0.128px;left:136px;-webkit-text-stroke:0.25px #000;">2014 Benetton Італія 46(р)</div>
<div class="t" style="top:1196.70px;font-size:22.5px;line-height:29px;color:#000;letter-spacing:-0.42px;left:632px;-webkit-text-stroke:0.25px #000;">230600</div>
<div class="t" style="top:1196.70px;font-size:22.5px;line-height:29px;color:#000;letter-spacing:-0.542px;left:769px;-webkit-text-stroke:0.25px #000;">2973090000909</div>
<div class="t" style="top:1196.70px;font-size:22.5px;line-height:29px;color:#000;letter-spacing:-0.3px;left:-54.5px;width:1200px;text-align:right;-webkit-text-stroke:0.25px #000;">0</div>
<div class="t" style="top:1196.70px;font-size:22.5px;line-height:29px;color:#000;letter-spacing:-0.3px;left:84.5px;width:1200px;text-align:right;-webkit-text-stroke:0.25px #000;">1</div>
<div class="t" style="top:1196.70px;font-size:22.5px;line-height:29px;color:#000;letter-spacing:-0.294px;left:1294px;-webkit-text-stroke:0.25px #000;">Магазин Едельвейс</div>
<div class="t" style="top:1196.70px;font-size:22.5px;line-height:29px;color:#000;letter-spacing:-0.28px;left:444.5px;width:1200px;text-align:right;-webkit-text-stroke:0.25px #000;">175,00</div>
<div class="t" style="top:1196.70px;font-size:22.5px;line-height:29px;color:#000;letter-spacing:0.22px;left:588.5px;width:1200px;text-align:right;-webkit-text-stroke:0.25px #000;">900,00</div>
<div class="t" style="top:1196.70px;font-size:22.5px;line-height:29px;color:#000;letter-spacing:0.22px;left:874.5px;width:1200px;text-align:right;-webkit-text-stroke:0.25px #000;">900,00</div>
<div class="t" style="top:1196.70px;font-size:22.5px;line-height:29px;color:#000;letter-spacing:0.22px;left:1022.5px;width:1200px;text-align:right;-webkit-text-stroke:0.25px #000;">900,00</div>
<div class="t" style="top:1196.70px;font-size:22.5px;line-height:29px;color:#000;letter-spacing:-0.537px;left:2234px;-webkit-text-stroke:0.25px #000;">Дозволено</div>
<svg class="r" style="left:26px;top:1195px" width="56" height="84" viewBox="0 0 56 84">
<path d="M2.3 0 H52 V10.8 H2.3 Z" fill="#8c8c94"/>
<path d="M6 2 H14 V8 H6 Z M22 1 H34 V7 H22 Z M40 2 H50 V9 H40 Z" fill="#a8a8ae"/>
<path d="M6.6 6 H42.1 L42.1 18.6 L39 50.2 L35 62 L32.6 78.6 H24 L27.9 73.8 L27.1 28.9 L25.5 27.3 L20 36 L18.4 42.3 L20.8 73.8 L21.6 78.6 H11 L8.2 62 L6.6 28.1 Z" fill="#36507f"/>
<path d="M10 12 L16 26 L12 44 Z M30 14 L38 22 L36 46 L31 36 Z M10 55 L14 70 L11 74 Z" fill="#5877ab"/>
<path d="M2.3 6.8 H9.8 V21 L5 19 Z M39 10 H48.4 V21 L41 20 Z" fill="#d8b0a0"/>
<path d="M0.3 82 Q8 78 20 79.3 L20 89.6 H2 Z M21.6 78.6 H32.6 V89.6 H22 Z" fill="#8a6a3c"/>
</svg>
</body></html>
